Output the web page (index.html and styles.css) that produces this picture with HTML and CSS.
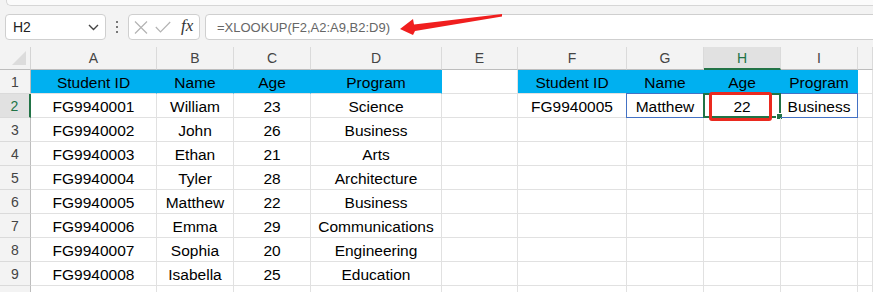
FILE: index.html
```html
<!DOCTYPE html>
<html lang="en">

<head>
    <meta charset="UTF-8">
    <meta name="viewport" content="width=device-width, initial-scale=1.0">
    <title>XLOOKUP</title>
    <link rel="stylesheet" href="styles.css">
</head>

<body>
    <div class="app">
        <div class="ribbon-edge"></div>

        <div class="formula-row">
            <div class="namebox">
                <span>H2</span>
                <svg class="chevron" width="11" height="7" viewBox="0 0 11 7">
                    <path d="M1 1 L5.5 5.5 L10 1" fill="none" stroke="#444" stroke-width="1.4" />
                </svg>
            </div>
            <div class="grip">
                <svg width="4" height="14" viewBox="0 0 4 14">
                    <rect x="1" y="1" width="2" height="2" fill="#777" />
                    <rect x="1" y="6" width="2" height="2" fill="#777" />
                    <rect x="1" y="11" width="2" height="2" fill="#777" />
                </svg>
            </div>
            <div class="fx-buttons">
                <svg width="14" height="13" viewBox="0 0 14 13">
                    <path d="M1 0.5 L13 12.5 M13 0.5 L1 12.5" stroke="#b3b3b3" stroke-width="1.2" />
                </svg>
                <svg width="16" height="12" viewBox="0 0 16 12">
                    <path d="M0.8 6 L5.5 10.8 L15.2 1" fill="none" stroke="#b3b3b3" stroke-width="1.2" />
                </svg>
                <span class="fx">fx</span>
            </div>
            <div class="formula">=XLOOKUP(F2,A2:A9,B2:D9)</div>
        </div>

        <div class="sheet">
            <!-- column headers -->
            <div class="corner"></div>
            <div class="colhead">A</div>
            <div class="colhead">B</div>
            <div class="colhead">C</div>
            <div class="colhead">D</div>
            <div class="colhead">E</div>
            <div class="colhead">F</div>
            <div class="colhead">G</div>
            <div class="colhead current">H</div>
            <div class="colhead">I</div>
            <div class="colhead"></div>

            <!-- row 1 -->
            <div class="rowhead">1</div>
            <div class="cell head">Student ID</div>
            <div class="cell head">Name</div>
            <div class="cell head">Age</div>
            <div class="cell head">Program</div>
            <div class="cell"></div>
            <div class="cell head">Student ID</div>
            <div class="cell head">Name</div>
            <div class="cell head">Age</div>
            <div class="cell head">Program</div>
            <div class="cell"></div>

            <!-- row 2 -->
            <div class="rowhead current">2</div>
            <div class="cell">FG9940001</div>
            <div class="cell">William</div>
            <div class="cell">23</div>
            <div class="cell">Science</div>
            <div class="cell"></div>
            <div class="cell">FG9940005</div>
            <div class="cell spill spill-start">Matthew</div>
            <div class="cell spill active">22</div>
            <div class="cell spill spill-end">Business</div>
            <div class="cell"></div>

            <div class="rowhead">3</div>
            <div class="cell">FG9940002</div>
            <div class="cell">John</div>
            <div class="cell">26</div>
            <div class="cell">Business</div>
            <div class="cell"></div><div class="cell"></div><div class="cell"></div><div class="cell"></div><div class="cell"></div><div class="cell"></div>

            <div class="rowhead">4</div>
            <div class="cell">FG9940003</div>
            <div class="cell">Ethan</div>
            <div class="cell">21</div>
            <div class="cell">Arts</div>
            <div class="cell"></div><div class="cell"></div><div class="cell"></div><div class="cell"></div><div class="cell"></div><div class="cell"></div>

            <div class="rowhead">5</div>
            <div class="cell">FG9940004</div>
            <div class="cell">Tyler</div>
            <div class="cell">28</div>
            <div class="cell">Architecture</div>
            <div class="cell"></div><div class="cell"></div><div class="cell"></div><div class="cell"></div><div class="cell"></div><div class="cell"></div>

            <div class="rowhead">6</div>
            <div class="cell">FG9940005</div>
            <div class="cell">Matthew</div>
            <div class="cell">22</div>
            <div class="cell">Business</div>
            <div class="cell"></div><div class="cell"></div><div class="cell"></div><div class="cell"></div><div class="cell"></div><div class="cell"></div>

            <div class="rowhead">7</div>
            <div class="cell">FG9940006</div>
            <div class="cell">Emma</div>
            <div class="cell">29</div>
            <div class="cell">Communications</div>
            <div class="cell"></div><div class="cell"></div><div class="cell"></div><div class="cell"></div><div class="cell"></div><div class="cell"></div>

            <div class="rowhead">8</div>
            <div class="cell">FG9940007</div>
            <div class="cell">Sophia</div>
            <div class="cell">20</div>
            <div class="cell">Engineering</div>
            <div class="cell"></div><div class="cell"></div><div class="cell"></div><div class="cell"></div><div class="cell"></div><div class="cell"></div>

            <div class="rowhead">9</div>
            <div class="cell">FG9940008</div>
            <div class="cell">Isabella</div>
            <div class="cell">25</div>
            <div class="cell">Education</div>
            <div class="cell"></div><div class="cell"></div><div class="cell"></div><div class="cell"></div><div class="cell"></div><div class="cell"></div>

            <!-- row 10, only its top edge shows -->
            <div class="rowhead"></div>
            <div class="cell"></div><div class="cell"></div><div class="cell"></div><div class="cell"></div><div class="cell"></div>
            <div class="cell"></div><div class="cell"></div><div class="cell"></div><div class="cell"></div><div class="cell"></div>
        </div>

        <!-- annotation arrow pointing at the formula -->
        <svg class="arrow" width="873" height="60" viewBox="0 0 873 60">
            <polygon points="400,29 413,19 414,24.5 502,14 502,16.5 415,31 413,35" fill="#f01e1e" />
        </svg>
    </div>
</body>

</html>
```

FILE: styles.css
```css
html,
body {
    margin: 0;
    padding: 0;
    background-color: #fff;
    overflow: hidden;
}

.app {
    position: relative;
    width: 873px;
    height: 292px;
    background-color: #f3f3f3;
    font-family: "Liberation Sans", Arial, sans-serif;
    overflow: hidden;
}

.ribbon-edge {
    height: 5px;
    margin-left: 6px;
    background-color: #fbfbfb;
    border-left: 1px solid #d6d6d6;
    border-bottom: 1px solid #d6d6d6;
    border-bottom-left-radius: 5px;
}

.formula-row {
    display: flex;
    align-items: stretch;
    height: 26px;
    margin-top: 8px;
    padding-left: 5px;
}

.namebox {
    width: 101px;
    box-sizing: border-box;
    display: flex;
    align-items: center;
    justify-content: space-between;
    padding: 0 6px 0 7px;
    background-color: #fff;
    border: 1px solid #cfcfcf;
    border-radius: 4px;
    font-size: 14px;
    color: #222;
}

.grip {
    width: 22px;
    display: flex;
    align-items: center;
    justify-content: center;
}

.fx-buttons {
    width: 72px;
    box-sizing: border-box;
    display: flex;
    align-items: center;
    gap: 7px;
    padding-left: 5px;
    background-color: #fff;
    border: 1px solid #cfcfcf;
    border-radius: 4px;
}

.fx {
    font-family: "Liberation Serif", serif;
    font-style: italic;
    font-size: 17px;
    color: #333;
    margin-left: 3px;
    margin-top: -2px;
}

.formula {
    flex: 1;
    margin-left: 5px;
    margin-right: -6px;
    display: flex;
    align-items: center;
    padding-left: 11px;
    background-color: #fff;
    border: 1px solid #cfcfcf;
    border-radius: 4px;
    font-size: 13px;
    color: #666;
}

.sheet {
    display: grid;
    grid-template-columns: 31px 126px 77px 77px 131px 76px 109px 77px 77px 77px 1fr;
    grid-template-rows: 23px;
    grid-auto-rows: 24px;
    margin-top: 7px;
    background-color: #fff;
}

.corner,
.colhead,
.rowhead {
    background-color: #f3f3f3;
    box-sizing: border-box;
    color: #444;
    font-size: 14px;
    display: flex;
    align-items: center;
    justify-content: center;
}

.corner {
    position: relative;
    border-right: 1px solid #d4d4d4;
    border-bottom: 1px solid #bdbdbd;
}

.corner::after {
    content: "";
    position: absolute;
    right: 4px;
    bottom: 4px;
    border-left: 14px solid transparent;
    border-bottom: 14px solid #dcdcdc;
}

.colhead {
    border-right: 1px solid #dadada;
    border-bottom: 1px solid #bdbdbd;
}

.colhead.current {
    background-color: #e1e1e1;
    color: #217346;
    border-bottom: 2px solid #217346;
}

.rowhead {
    border-right: 1px solid #bdbdbd;
    border-bottom: 1px solid #dadada;
}

.rowhead.current {
    background-color: #e1e1e1;
    color: #217346;
    border-right: 2px solid #217346;
}

.cell {
    position: relative;
    box-sizing: border-box;
    border-right: 1px solid #e1e1e1;
    border-bottom: 1px solid #e1e1e1;
    display: flex;
    align-items: center;
    justify-content: center;
    padding-top: 2px;
    font-size: 15.5px;
    color: #000;
    white-space: nowrap;
}

.cell.head {
    background-color: #00b0f0;
    border-right-color: #00b0f0;
}

.cell.spill {
    border-top: 1px solid #4472c4;
    border-bottom: 1px solid #4472c4;
    margin-top: -1px;
    padding-top: 3px;
}

.cell.spill-start {
    border-left: 1px solid #4472c4;
    margin-left: -1px;
}

.cell.spill-end {
    border-right: 1px solid #4472c4;
}

.cell.active {
    border: 2px solid #217346;
    margin-left: -1px;
    padding-top: 2px;
}

/* fill handle */
.cell.active::after {
    content: "";
    position: absolute;
    right: -4px;
    bottom: -4px;
    width: 5px;
    height: 5px;
    background-color: #217346;
    border: 1px solid #fff;
}

/* red highlight box drawn over the result */
.cell.active::before {
    content: "";
    position: absolute;
    left: 4px;
    right: 7px;
    top: -3px;
    bottom: -5px;
    border: 3px solid #ea2a1f;
    border-radius: 3px;
}

.arrow {
    position: absolute;
    left: 0;
    top: 0;
}
```
